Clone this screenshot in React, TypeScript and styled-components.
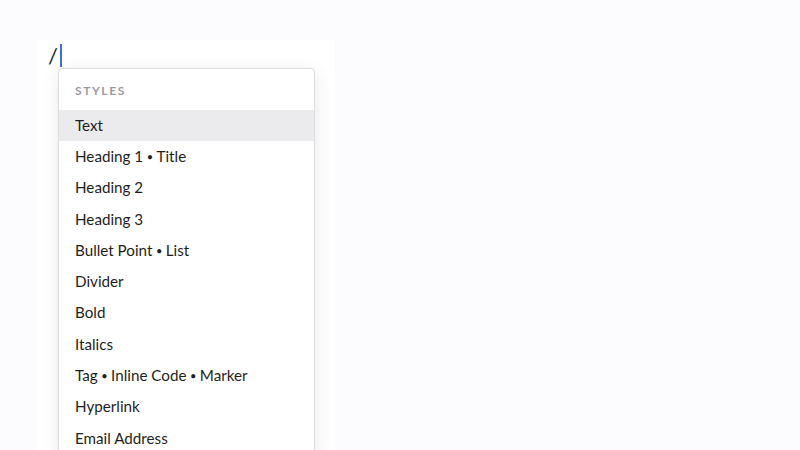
import React from "react";
import styled, { createGlobalStyle } from "styled-components";

const GlobalStyle = createGlobalStyle`
  html, body {
    margin: 0;
    padding: 0;
    height: 100%;
    overflow: hidden;
    background: #fcfbfd;
    font-family: Lato, "Open Sans", sans-serif;
  }
`;

const Page = styled.div`
  width: 800px;
  height: 450px;
  box-sizing: border-box;
  padding: 40px 0 0 38px;
`;

const Editor = styled.div`
  position: relative;
  width: 297px;
  height: 410px;
  background: #ffffff;
  box-sizing: border-box;
  padding: 3px 0 0 10px;
`;

const Line = styled.div`
  display: flex;
  align-items: center;
  height: 24px;
  font-size: 22px;
  font-weight: 400;
  color: #2a2a2c;
  font-family: Lato, sans-serif;
`;

const Caret = styled.span`
  display: inline-block;
  width: 2px;
  height: 23px;
  margin-left: 2px;
  background: #3f6fd8;
`;

const Menu = styled.div`
  position: absolute;
  left: 20px;
  top: 28px;
  width: 257px;
  background: #ffffff;
  border: 1px solid #dcdbde;
  border-radius: 4px;
  box-shadow: 0 4px 18px rgba(0, 0, 0, 0.09);
  box-sizing: border-box;
`;

const Header = styled.div`
  height: 41px;
  display: flex;
  align-items: center;
  padding: 1px 0 0 16px;
  box-sizing: border-box;
  font-size: 12px;
  font-weight: 700;
  letter-spacing: 1.6px;
  color: #9b9a9d;
`;

const Item = styled.div<{ $active?: boolean }>`
  height: 31.3px;
  display: flex;
  align-items: center;
  box-sizing: border-box;
  padding: 0 0 2px 16px;
  font-size: 15.2px;
  color: #1f1e21;
  background: ${(p) => (p.$active ? "#ebeaec" : "transparent")};
`;

const ItemText = styled.span`
  white-space: nowrap;
`;

const Dot = styled.span`
  font-size: 11px;
  margin: 0 3.5px;
  vertical-align: 1px;
`;

const items = [
  "Text",
  "Heading 1 • Title",
  "Heading 2",
  "Heading 3",
  "Bullet Point • List",
  "Divider",
  "Bold",
  "Italics",
  "Tag • Inline Code • Marker",
  "Hyperlink",
  "Email Address",
];

function Label({ text }: { text: string }) {
  const parts = text.split(" • ");
  return (
    <ItemText>
      {parts.map((p, i) => (
        <React.Fragment key={i}>
          {i > 0 && <Dot>•</Dot>}
          {p}
        </React.Fragment>
      ))}
    </ItemText>
  );
}

export default function App() {
  return (
    <>
      <GlobalStyle />
      <Page>
        <Editor>
          <Line>
            /<Caret />
          </Line>
          <Menu>
            <Header>STYLES</Header>
            {items.map((label, i) => (
              <Item key={label} $active={i === 0}>
                <Label text={label} />
              </Item>
            ))}
          </Menu>
        </Editor>
      </Page>
    </>
  );
}
